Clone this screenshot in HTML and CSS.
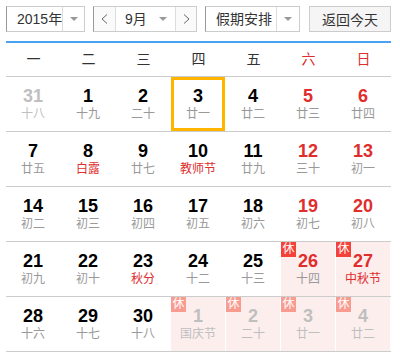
FILE: index.html
```html
<!DOCTYPE html>
<html lang="zh-CN">
   <head>
      <title>万年历</title>
      <meta charset="UTF-8">
      <link rel="stylesheet" href="styles.css">
   </head>
   <body>
      <div class="toolbar">
         <div class="select year">
            <span class="select-text">2015年</span>
            <span class="select-arrow"></span>
         </div>
         <div class="month-group">
            <span class="nav prev"><svg width="7" height="10" viewBox="0 0 7 10"><polyline points="6,0.5 1,5 6,9.5" fill="none" stroke="#666" stroke-width="1"/></svg></span>
            <span class="month"><span>9月</span><i class="tri"></i></span>
            <span class="nav next"><svg width="7" height="10" viewBox="0 0 7 10"><polyline points="1,0.5 6,5 1,9.5" fill="none" stroke="#666" stroke-width="1"/></svg></span>
         </div>
         <div class="select holiday">
            <span class="select-text">假期安排</span>
            <span class="select-arrow"></span>
         </div>
         <button class="today">返回今天</button>
      </div>
      <div class="calendar">
         <div class="weekdays">
            <span>一</span><span>二</span><span>三</span><span>四</span><span>五</span>
            <span class="weekend">六</span><span class="weekend">日</span>
         </div>
         <div class="week">
            <div class="day other"><b>31</b><small>十八</small></div>
            <div class="day"><b>1</b><small>十九</small></div>
            <div class="day"><b>2</b><small>二十</small></div>
            <div class="day today-cell"><b>3</b><small>廿一</small></div>
            <div class="day"><b>4</b><small>廿二</small></div>
            <div class="day weekend"><b>5</b><small>廿三</small></div>
            <div class="day weekend"><b>6</b><small>廿四</small></div>
         </div>
         <div class="week">
            <div class="day"><b>7</b><small>廿五</small></div>
            <div class="day"><b>8</b><small class="fest">白露</small></div>
            <div class="day"><b>9</b><small>廿七</small></div>
            <div class="day"><b>10</b><small class="fest">教师节</small></div>
            <div class="day"><b>11</b><small>廿九</small></div>
            <div class="day weekend"><b>12</b><small>三十</small></div>
            <div class="day weekend"><b>13</b><small>初一</small></div>
         </div>
         <div class="week">
            <div class="day"><b>14</b><small>初二</small></div>
            <div class="day"><b>15</b><small>初三</small></div>
            <div class="day"><b>16</b><small>初四</small></div>
            <div class="day"><b>17</b><small>初五</small></div>
            <div class="day"><b>18</b><small>初六</small></div>
            <div class="day weekend"><b>19</b><small>初七</small></div>
            <div class="day weekend"><b>20</b><small>初八</small></div>
         </div>
         <div class="week">
            <div class="day"><b>21</b><small>初九</small></div>
            <div class="day"><b>22</b><small>初十</small></div>
            <div class="day"><b>23</b><small class="fest">秋分</small></div>
            <div class="day"><b>24</b><small>十二</small></div>
            <div class="day"><b>25</b><small>十三</small></div>
            <div class="day weekend rest"><em>休</em><b>26</b><small>十四</small></div>
            <div class="day weekend rest"><em>休</em><b>27</b><small class="fest">中秋节</small></div>
         </div>
         <div class="week">
            <div class="day"><b>28</b><small>十六</small></div>
            <div class="day"><b>29</b><small>十七</small></div>
            <div class="day"><b>30</b><small>十八</small></div>
            <div class="day other rest"><em>休</em><b>1</b><small>国庆节</small></div>
            <div class="day other rest"><em>休</em><b>2</b><small>二十</small></div>
            <div class="day other rest"><em>休</em><b>3</b><small>廿一</small></div>
            <div class="day other rest"><em>休</em><b>4</b><small>廿二</small></div>
         </div>
      </div>
   </body>
</html>
```

FILE: styles.css
```css
*
{ box-sizing:border-box;}
body
{ margin:0;
  padding:6px;
  font-family:"Liberation Sans", "Noto Sans CJK SC", sans-serif;
  font-size:14px;
  color:#333;
  background:#fff;}

/* top controls */
.toolbar
{ display:flex;
  width:385px;
  height:26px;}
.select
{ display:flex;
  border:1px solid #ccc;
  border-left-color:#999;
  background:#fff;}
.year
{ width:79px;}
.holiday
{ width:95px;
  margin-left:8px;}
.select-text
{ flex:1;
  line-height:24px;
  padding-left:10px;
  white-space:nowrap;}
.select-arrow
{ width:22px;
  border-left:1px solid #ddd;
  display:flex;
  align-items:center;
  justify-content:center;}
.holiday .select-arrow
{ width:23px;}
.select-arrow::after, .tri
{ content:"";
  display:block;
  border:4px solid transparent;
  border-top-color:#999;
  border-bottom:0;}
.month-group
{ display:flex;
  width:104px;
  margin-left:8px;
  border:1px solid #ccc;
  border-left-color:#999;}
.nav
{ display:flex;
  align-items:center;
  justify-content:center;
  background:#fafafa;}
.prev
{ width:21px;}
.next
{ flex:1;}
.month
{ width:61px;
  display:flex;
  align-items:center;
  justify-content:space-between;
  padding:0 8px 0 9px;
  border-left:1px solid #ddd;
  border-right:1px solid #ddd;
  line-height:24px;}
.today
{ margin-left:auto;
  width:82px;
  height:26px;
  padding:0;
  border:1px solid #ccc;
  background:#f5f5f5;
  font:inherit;
  color:#333;}

/* calendar grid */
.calendar
{ width:385px;
  margin-top:9px;
  border-top:2px solid #4aa3f2;}
.weekdays
{ display:grid;
  grid-template-columns:repeat(7, 55px);
  height:34px;
  line-height:33px;
  text-align:center;
  border-bottom:1px solid #ccc;}
.weekdays .weekend
{ color:#e02d2d;}
.week
{ display:grid;
  grid-template-columns:repeat(7, 55px);
  border-bottom:1px solid #ccc;}
.day
{ position:relative;
  height:54px;
  padding-top:9px;
  border-right:1px solid #fff;
  text-align:center;}
.day b
{ display:block;
  font-size:18px;
  line-height:20px;
  color:#000;}
.day small
{ display:block;
  font-size:12px;
  line-height:16px;
  color:#999;}
.day small.fest
{ color:#e02d2d;}
.day.weekend b
{ color:#e02d2d;}
.day.today-cell
{ box-shadow:inset 0 0 0 3px #ffb400;}
.day.rest
{ background:#fdeeee;}
.day em
{ position:absolute;
  top:0;
  left:0;
  width:15px;
  height:15px;
  font-style:normal;
  font-size:12px;
  line-height:15px;
  color:#fff;
  background:#f4423a;}
.day.other b, .day.other small
{ color:#bfbfbf;}
.day.other em
{ background:#f89c92;}
```
